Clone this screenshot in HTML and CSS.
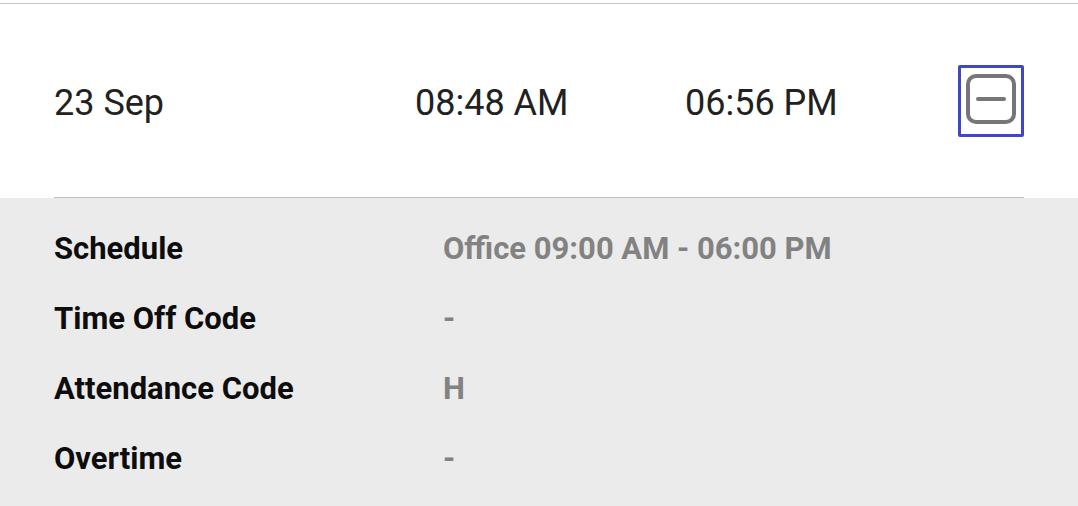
FILE: index.html
```html
<!DOCTYPE html>
<html lang="en">
<head>
<meta charset="utf-8">
<title>Attendance</title>
<link rel="stylesheet" href="styles.css">
</head>
<body>
<div class="topline"></div>
<section class="summary">
  <div class="summary-inner">
    <div class="date">23 Sep</div>
    <div class="time">08:48 AM</div>
    <div class="time">06:56 PM</div>
    <button class="toggle" aria-label="Collapse">
      <svg width="50" height="50" viewBox="0 0 50 50" aria-hidden="true">
        <rect x="2" y="2" width="46" height="46" rx="8" ry="8" fill="none" stroke="#767676" stroke-width="4"/>
        <line x1="12" y1="25" x2="38" y2="25" stroke="#767676" stroke-width="4" stroke-linecap="round"/>
      </svg>
    </button>
  </div>
</section>
<section class="details">
  <div class="row"><div class="label">Schedule</div><div class="value">Office 09:00 AM - 06:00 PM</div></div>
  <div class="row"><div class="label">Time Off Code</div><div class="value">-</div></div>
  <div class="row"><div class="label">Attendance Code</div><div class="value">H</div></div>
  <div class="row"><div class="label">Overtime</div><div class="value">-</div></div>
</section>
</body>
</html>
```

FILE: styles.css
```css
html, body {
  margin: 0;
  padding: 0;
  background: #ffffff;
  font-family: Roboto, "Liberation Sans", Arial, sans-serif;
}
body {
  width: 1078px;
  height: 506px;
  overflow: hidden;
}
.topline {
  height: 3px;
  border-bottom: 1px solid #c6c6c6;
}
.summary {
  background: #ffffff;
  padding: 0 54px;
}
.summary-inner {
  height: 193px;
  border-bottom: 1px solid #c2c2c2;
  display: grid;
  grid-template-columns: 361px 270px 1fr auto;
  align-items: center;
  color: #212121;
  font-size: 36px;
}
.date, .time {
  line-height: 42px;
  padding-top: 4px;
}
.toggle {
  width: 66px;
  height: 72px;
  padding: 0;
  margin: 0;
  border: 3px solid #3f47c4;
  border-radius: 2px;
  background: #ffffff;
  display: flex;
  align-items: center;
  justify-content: center;
}
.toggle svg {
  display: block;
  margin-top: -3px;
}
.details {
  background: #ebebeb;
  padding: 16px 54px 12px;
}
.row {
  display: grid;
  grid-template-columns: 389px 1fr;
  height: 70px;
  line-height: 70px;
  font-size: 31px;
  font-weight: 700;
}
.label {
  color: #0d0d0d;
}
.value {
  color: #828282;
}
```
